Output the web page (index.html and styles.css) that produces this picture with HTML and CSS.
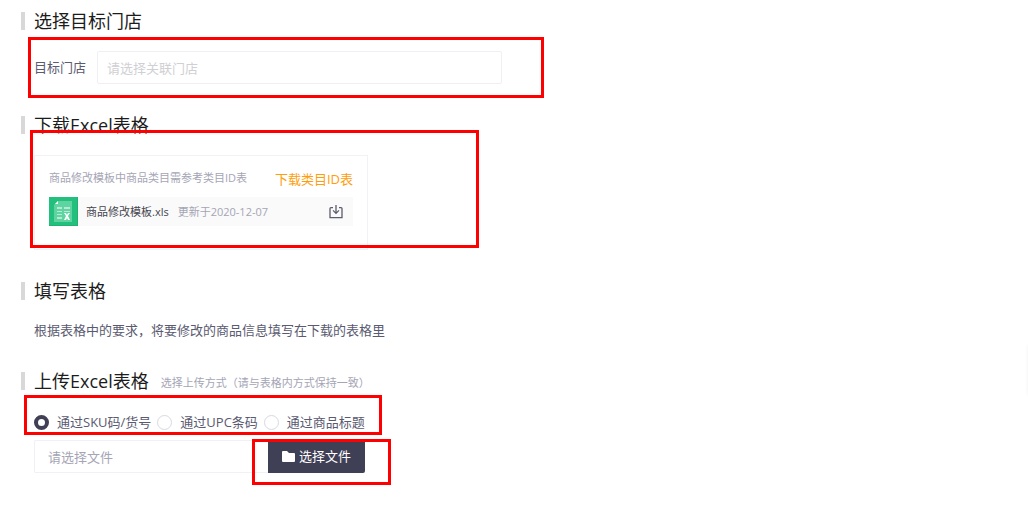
FILE: index.html
```html
<!DOCTYPE html>
<html lang="zh-CN">
<head>
    <meta charset="UTF-8">
    <meta name="viewport" content="width=device-width, initial-scale=1.0">
    <title>批量修改商品</title>
    <link rel="stylesheet" href="styles.css">
</head>
<body>

<main class="page">
    <section class="step">
        <h2 class="step-title">选择目标门店</h2>
        <div class="store-row marked">
            <label for="store">目标门店</label>
            <input type="text" id="store" class="store-input" placeholder="请选择关联门店">
            <span class="mark mark-store"></span>
        </div>
    </section>

    <section class="step">
        <h2 class="step-title">下载Excel表格</h2>
        <div class="card marked">
            <div class="card-head">
                <span class="card-tip">商品修改模板中商品类目需参考类目ID表</span>
                <a href="#" class="card-link">下载类目ID表</a>
            </div>
            <div class="file">
                <svg class="file-icon" viewBox="0 0 29 29">
                    <rect width="29" height="29" fill="#22c07c"/>
                    <path d="M0 28h29v1H0zM28 0h1v29h-1z" fill="#1fb273"/>
                    <path d="M9 4h14v21H5V8z" fill="#5fd3a1"/>
                    <path d="M9 4v3H6z" fill="#fff"/>
                    <path d="M8 10h5v2H8zM15 10h6v2h-6zM8 14h5v1H8zM15 14h6v1h-6zM8 17h5v1H8zM8 20h5v2H8z" fill="#b5ebd3"/>
                    <path d="M15 16h2l1 2 1-2h2l-2 3 2 4h-2l-1-2-1 2h-2l2-4z" fill="#fff"/>
                </svg>
                <span class="file-name">商品修改模板.xls</span>
                <span class="file-date">更新于2020-12-07</span>
                <button type="button" class="file-download" aria-label="下载">
                    <svg viewBox="0 0 14 14" width="14" height="14" fill="none" stroke="#5c5c70" stroke-width="1.3">
                        <path d="M4 2.6H2a1 1 0 0 0-1 1v9h12v-9a1 1 0 0 0-1-1h-2"/>
                        <path d="M7 0v8.4M4 5.4l3 3 3-3"/>
                    </svg>
                </button>
            </div>
            <span class="mark mark-card"></span>
        </div>
    </section>

    <section class="step">
        <h2 class="step-title">填写表格</h2>
        <p class="step-text">根据表格中的要求，将要修改的商品信息填写在下载的表格里</p>
    </section>

    <section class="step">
        <h2 class="step-title">上传Excel表格 <small>选择上传方式（请与表格内方式保持一致）</small></h2>
        <div class="radios marked">
            <label><input type="radio" name="mode" checked>通过SKU码/货号</label>
            <label><input type="radio" name="mode">通过UPC条码</label>
            <label><input type="radio" name="mode">通过商品标题</label>
            <span class="mark mark-radios"></span>
        </div>
        <div class="upload">
            <input type="text" class="upload-input" placeholder="请选择文件" aria-label="请选择文件" readonly>
            <div class="marked">
                <button type="button" class="upload-btn">
                    <svg viewBox="0 0 13 11" width="13" height="11">
                        <path d="M1 0h4l2 2h5a1 1 0 0 1 1 1v7a1 1 0 0 1-1 1H1a1 1 0 0 1-1-1V1a1 1 0 0 1 1-1z" fill="#fff"/>
                    </svg>
                    选择文件
                </button>
                <span class="mark mark-upload"></span>
            </div>
        </div>
    </section>
</main>

<aside class="side-tab"></aside>

</body>
</html>
```

FILE: styles.css
```css
* {
    box-sizing: border-box;
}

body {
    margin: 0;
    background: #fff;
    color: #5a5a70;
    font: 13px/19px "Open Sans", "Noto Sans CJK SC", sans-serif;
}

input, button {
    font: inherit;
}

.page {
    padding: 12px 21px;
}

.step {
    margin-bottom: 32px;
    padding-left: 13px;
}

.step-title {
    display: flex;
    align-items: center;
    gap: 12px;
    margin: 0 0 21px -13px;
    padding-left: 9px;
    border-left: 4px solid #d8d8d8;
    color: #1c1c1c;
    font-size: 18px;
    font-weight: normal;
    line-height: 18px;
}

.step-title small {
    padding-top: 4px;
    color: #a5a5b5;
    font-size: 11px;
    line-height: 14px;
}

.step-text {
    margin: 0;
}

/* red frames */
.marked {
    position: relative;
}

.mark {
    position: absolute;
    border: 3px solid #f00;
    pointer-events: none;
}

.mark-store {
    inset: -14px -42px -14px -6px;
}

.mark-card {
    inset: -26px -112px 1px -5px;
}

.mark-radios {
    inset: -16px -17px -2px -10px;
}

.mark-upload {
    inset: -1px -26px -12px -16px;
}

/* store */
.store-row {
    display: flex;
    align-items: center;
    gap: 11px;
    max-width: 468px;
}

.store-input {
    flex: 1;
    min-width: 0;
    height: 33px;
    padding: 0 9px;
    border: 1px solid #f0f0f4;
    border-radius: 2px;
}

.store-input::placeholder {
    color: #d0d0d4;
}

/* template card */
.card {
    max-width: 334px;
    padding: 14px 14px 23px;
    border: 1px solid #f2f2f6;
}

.card-head {
    display: flex;
    align-items: flex-start;
    justify-content: space-between;
    margin-bottom: 8px;
}

.card-tip {
    color: #a5a5b5;
    font-size: 11px;
    line-height: 15px;
}

.card-link {
    color: #ff9d0a;
    text-decoration: none;
}

.file {
    display: flex;
    align-items: center;
    padding-right: 10px;
    background: #fafafa;
    font-size: 11px;
}

.file-icon {
    width: 29px;
    height: 29px;
    margin-right: 8px;
}

.file-name {
    margin-right: 9px;
    color: #45454f;
}

.file-date {
    color: #a5a5b5;
}

.file-download {
    display: flex;
    margin-left: auto;
    padding: 0;
    border: 0;
    background: none;
}

/* upload */
.radios {
    display: flex;
    align-items: center;
    gap: 6px;
    width: fit-content;
    height: 22px;
    margin-bottom: 7px;
}

.radios label {
    display: flex;
    align-items: center;
    gap: 8px;
}

.radios input {
    appearance: none;
    width: 15px;
    height: 15px;
    margin: 0;
    border: 1px solid #d8d8e2;
    border-radius: 50%;
}

.radios input:checked {
    border: 4px solid #3f3f55;
}

.upload {
    display: flex;
    max-width: 331px;
}

.upload-input {
    flex: 1;
    min-width: 0;
    height: 33px;
    padding: 0 13px;
    border: 1px solid #f0f0f6;
    border-right: 0;
    border-radius: 2px 0 0 2px;
}

.upload-input::placeholder {
    color: #a5a5b5;
}

.upload-btn {
    display: flex;
    align-items: center;
    gap: 4px;
    height: 33px;
    padding: 0 14px;
    border: 0;
    border-radius: 0 2px 2px 0;
    background: #3f3f55;
    color: #fff;
}

/* edge of the floating side tab */
.side-tab {
    position: fixed;
    top: 345px;
    left: 100%;
    width: 20px;
    height: 50px;
    box-shadow: 0 0 4px rgba(0, 0, 0, .06);
}
```
